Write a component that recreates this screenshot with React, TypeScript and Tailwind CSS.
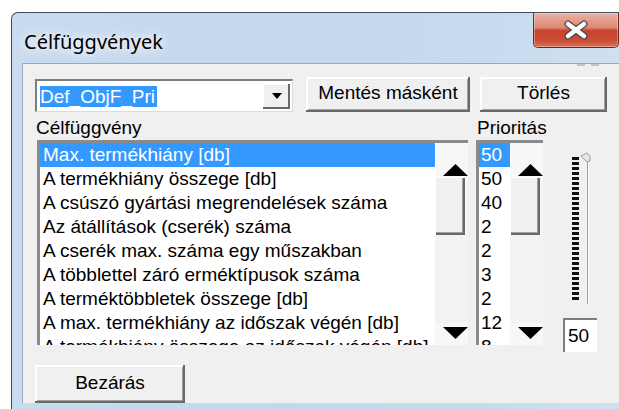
import React from "react";

const goals = [
  "Max. termékhiány [db]",
  "A termékhiány összege [db]",
  "A csúszó gyártási megrendelések száma",
  "Az átállítások (cserék) száma",
  "A cserék max. száma egy műszakban",
  "A többlettel záró erméktípusok száma",
  "A terméktöbbletek összege [db]",
  "A max. termékhiány az időszak végén [db]",
  "A termékhiány összege az időszak végén [db]",
];

const priorities = ["50", "50", "40", "2", "2", "3", "2", "12", "8"];

const raised =
  "bg-[#f0f0f0] shadow-[inset_-2px_-2px_0_#696969,inset_2px_2px_0_#ffffff,inset_-3px_-3px_0_#a0a0a0]";

function Button({ label, className }: { label: string; className: string }) {
  return (
    <div className={`${raised} flex items-center justify-center text-black ${className}`}>
      <span className="-mt-[2px]">{label}</span>
    </div>
  );
}

function UpArrow() {
  return (
    <svg width="25" height="12" viewBox="0 0 25 12" className="block">
      <polygon points="0,12 12.5,0 25,12" fill="#000" />
    </svg>
  );
}

function DownArrow() {
  return (
    <svg width="25" height="12" viewBox="0 0 25 12" className="block">
      <polygon points="0,0 25,0 12.5,12" fill="#000" />
    </svg>
  );
}

function ScrollBar() {
  return (
    <div className="flex w-[33px] flex-col bg-[#f6f6f6]">
      <div className="flex h-[34px] items-end justify-end pb-[1px] bg-[#f7f7f7] border-l border-white">
        <UpArrow />
      </div>
      <div className="h-[58px] w-[30px] bg-[#f0f0f0] border-l border-t border-white shadow-[inset_-2px_-2px_0_#696969,inset_-3px_-3px_0_#a0a0a0]" />
      <div className="flex-1 bg-[repeating-conic-gradient(#ececec_0%_25%,#fafafa_0%_50%)] bg-[length:2px_2px]" />
      <div className="flex h-[22px] items-start justify-end pt-[4px] bg-[#f7f7f7]">
        <DownArrow />
      </div>
    </div>
  );
}

function Slider() {
  const ticks = [];
  for (let y = 7; y <= 150; y += 5) ticks.push(y);
  return (
    <svg width="34" height="160" viewBox="0 0 34 160" className="block">
      {ticks.map((y) => (
        <rect key={y} x="9" y={y} width="7" height="3" fill="#111" />
      ))}
      <rect x="24" y="6" width="1" height="148" fill="#a0a0a0" />
      <rect x="25" y="6" width="1" height="148" fill="#ffffff" />
      <polygon points="18,6 24,3 27,6 27,11 24,12" fill="#e6e6e6" stroke="#a0a0a0" strokeWidth="1" />
    </svg>
  );
}

export default function App() {
  return (
    <div
      className="h-[409px] w-[619px] overflow-hidden bg-white pl-[11px] pt-[12px] text-[19px] text-black"
      style={{ fontFamily: '"Liberation Sans", Arial, sans-serif' }}
    >
      <div className="flex h-full flex-col overflow-hidden rounded-tl-[7px] border-l border-t border-[#3e4c5c] bg-[linear-gradient(90deg,#c8dbef_0%,#c3d7ed_45%,#c7daee_75%,#d0e0f1_100%)]">
        {/* caption */}
        <div className="flex h-[50px] items-start">
          <div
            className="ml-[12px] mt-[15px] text-[20px] leading-[28px] text-black [text-shadow:0_0_8px_#ffffff,0_0_14px_#ffffff]"
            style={{ fontFamily: '"Noto Sans", "Open Sans", sans-serif' }}
          >
            Célfüggvények
          </div>
          <div className="ml-auto flex h-[35px] w-[86px] items-center justify-center rounded-b-[5px] border border-t-0 border-[#6e2a21] bg-[linear-gradient(180deg,#eab0a3_0%,#dd8a78_42%,#c6432c_52%,#cc4c34_80%,#dc6e58_100%)] shadow-[inset_0_0_0_1px_rgba(255,255,255,0.35)]">
            <svg width="26" height="20" viewBox="0 0 26 20" className="block">
              <path d="M5 4 L21 16 M21 4 L5 16" stroke="#4a4a4a" strokeWidth="7" strokeLinecap="round" />
              <path d="M5 4 L21 16 M21 4 L5 16" stroke="#ffffff" strokeWidth="4.5" strokeLinecap="round" />
            </svg>
          </div>
        </div>

        {/* frame + client area */}
        <div className="flex flex-1 pb-[6px] pl-[10px]">
          <div className="relative flex-1 border-l border-t border-[#98aabd] bg-[#f0f0f0] pl-[12px] pt-[13px]">
            <div className="absolute right-[20px] top-[0px] flex gap-[6px]">
              <div className="h-[2px] w-[8px] bg-[#c4c4c4]" />
              <div className="h-[2px] w-[8px] bg-[#c4c4c4]" />
            </div>

            {/* top row */}
            <div className="flex h-[35px] items-start">
              <div className="mt-[2px] flex h-[33px] w-[258px] items-center border-l-[2px] border-t-[2px] border-r border-b border-l-[#7d7d7d] border-t-[#7d7d7d] border-r-[#dcdcdc] border-b-[#dcdcdc] bg-white pl-[3px]">
                <span className="h-[21px] bg-[#3399ff] pr-[2px] text-[19px] leading-[21px] text-white">Def_ObjF_Pri</span>
                <div className="ml-auto mr-[2px] flex h-[25px] w-[27px] items-center justify-center bg-[#f0f0f0] shadow-[inset_-2px_-2px_0_#696969,inset_1px_1px_0_#ffffff]">
                  <svg width="10" height="6" viewBox="0 0 10 6" className="block">
                    <polygon points="0,0 10,0 5,6" fill="#000" />
                  </svg>
                </div>
              </div>
              <Button label="Mentés másként" className="ml-[13px] h-[35px] w-[164px]" />
              <Button label="Törlés" className="ml-[10px] h-[35px] w-[127px]" />
            </div>

            {/* lists */}
            <div className="mt-[6px] flex items-start">
              <div className="w-[433px]">
                <div className="h-[22px] pl-[1px] leading-[20px]">Célfüggvény</div>
                <div className="ml-[2px] flex h-[205px] border-l-[3px] border-t-[3px] border-[#8a8a8a]">
                  <div className="flex-1 overflow-hidden bg-white">
                    {goals.map((g, i) => (
                      <div
                        key={g}
                        className={`h-[24px] whitespace-nowrap pl-[3px] leading-[24px] ${i === 0 ? "bg-[#3399ff] text-white" : ""}`}
                      >
                        {g}
                      </div>
                    ))}
                  </div>
                  <ScrollBar />
                </div>
              </div>

              <div className="ml-[8px] w-[67px]">
                <div className="h-[22px] pl-[1px] leading-[20px]">Prioritás</div>
                <div className="flex h-[205px] border-l-[3px] border-t-[3px] border-[#8a8a8a]">
                  <div className="flex-1 overflow-hidden bg-white">
                    {priorities.map((p, i) => (
                      <div
                        key={i}
                        className={`h-[24px] pl-[2px] leading-[24px] ${i === 0 ? "bg-[#3399ff] text-white" : ""}`}
                      >
                        {p}
                      </div>
                    ))}
                  </div>
                  <ScrollBar />
                </div>
              </div>

              <div className="ml-[20px] w-[34px] pt-[32px]">
                <Slider />
                <div className="mt-[8px] flex h-[34px] w-[34px] items-center border-l-[2px] border-t-[2px] border-[#7d7d7d] bg-white pl-[3px] leading-[24px]">
                  50
                </div>
              </div>
            </div>

            {/* bottom */}
            <Button label="Bezárás" className="mt-[13px] h-[38px] w-[150px]" />
          </div>
        </div>
      </div>
    </div>
  );
}
